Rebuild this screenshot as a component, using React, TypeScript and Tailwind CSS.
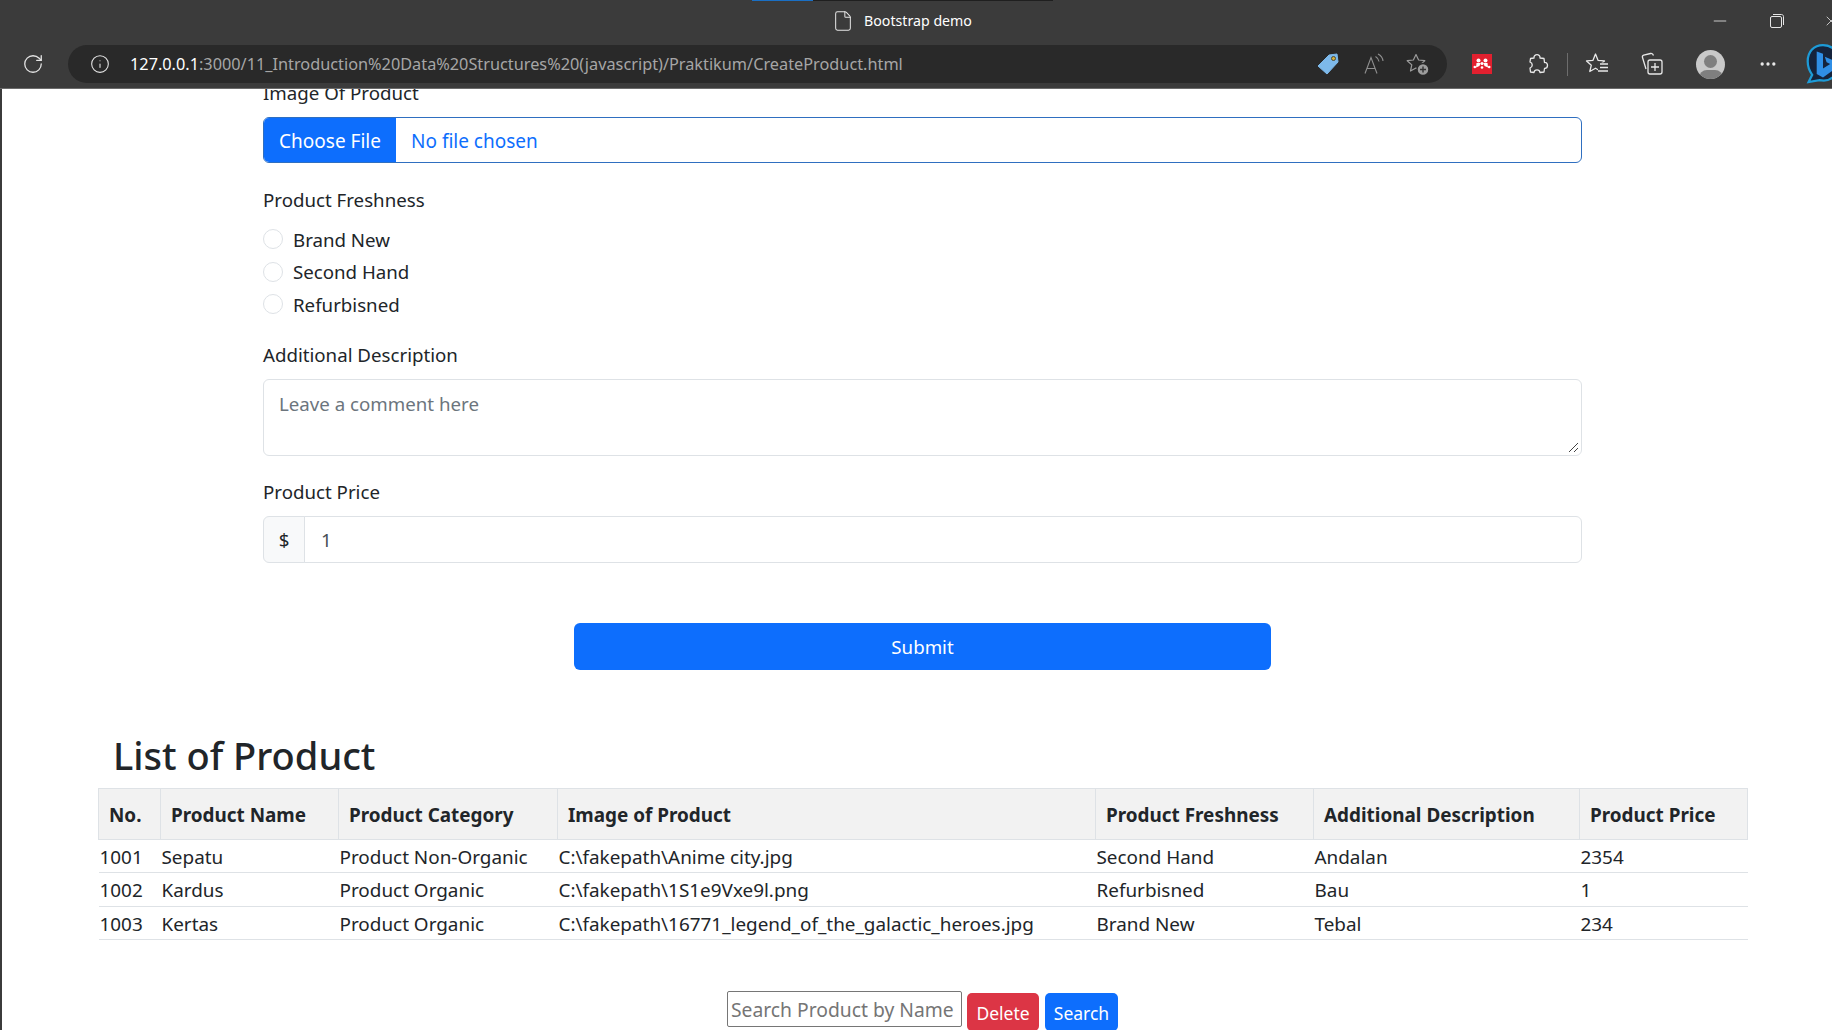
import { Info, RotateCw, File as FileIcon, Minus, X, MoreHorizontal } from "lucide-react";

const font = "font-['Noto_Sans','Open_Sans',sans-serif]";

const rows = [
  ["1001", "Sepatu", "Product Non-Organic", "C:\\fakepath\\Anime city.jpg", "Second Hand", "Andalan", "2354"],
  ["1002", "Kardus", "Product Organic", "C:\\fakepath\\1S1e9Vxe9l.png", "Refurbisned", "Bau", "1"],
  ["1003", "Kertas", "Product Organic", "C:\\fakepath\\16771_legend_of_the_galactic_heroes.jpg", "Brand New", "Tebal", "234"],
];

const headers = ["No.", "Product Name", "Product Category", "Image of Product", "Product Freshness", "Additional Description", "Product Price"];

const star = "M10 2.500 12.600 8 18.800 8.700 14.200 12.900 15.500 19 10 15.900 4.500 19 5.800 12.900 1.200 8.700 7.400 8z";

function BrowserBar() {
  return (
    <div className="h-[89px] shrink-0 bg-[#3b3b3b] border-b border-[#6b6b6b] text-white">
      <div className="h-[45px]">
        <div className="flex h-px ml-[752px]">
          <div className="w-[61px] bg-[#1a6fc4]" />
          <div className="w-[240px] bg-[#1f1f1f]" />
        </div>
        <div className="flex items-center h-[39px]">
          <FileIcon className="ml-[832px] w-[22px] h-[24px] text-[#e6e6e6] shrink-0" strokeWidth={1.1} />
          <span className="ml-[10px] w-[108px] text-[14.200px] whitespace-nowrap shrink-0">Bootstrap demo</span>
          <Minus className="ml-[738px] w-[20px] h-[20px] text-[#e6e6e6] shrink-0" strokeWidth={1} />
          <svg viewBox="0 0 14 14" fill="none" stroke="#e6e6e6" strokeWidth="1" className="ml-[40px] w-[14px] h-[14px] shrink-0">
            <rect x="0.500" y="2.500" width="11" height="11" rx="1.500" />
            <path d="M3 .5h8.500c1.100 0 2 .9 2 2V11" />
          </svg>
          <X className="ml-[39px] w-[16px] h-[16px] text-[#e6e6e6] shrink-0" strokeWidth={1.2} />
        </div>
      </div>
      <div className="flex items-center h-[38px]">
        <RotateCw className="ml-[22px] w-[22px] h-[22px] text-[#e4e4e4] shrink-0" strokeWidth={1.4} />
        <div className="ml-[24px] w-[1379px] h-[38px] rounded-full bg-[#292929] flex items-center shrink-0">
          <Info className="ml-[22px] w-[20px] h-[20px] text-[#e4e4e4] shrink-0" strokeWidth={1.3} />
          <div className="ml-[20px] w-[780px] text-[16.300px] whitespace-nowrap shrink-0">
            <span className="text-white">127.0.0.1</span>
            <span className="text-[#a6a6a6]">:3000/11_Introduction%20Data%20Structures%20(javascript)/Praktikum/CreateProduct.html</span>
          </div>
          <svg viewBox="0 0 22 22" className="ml-[407px] w-[22px] h-[22px] shrink-0">
            <path d="M1 13 12 2l8-1 1 8-11 12z" fill="#7db9ea" stroke="#7db9ea" strokeLinejoin="round" />
            <circle cx="16.500" cy="5.500" r="2" fill="#d8b23a" stroke="#4a4a35" />
          </svg>
          <svg viewBox="0 0 22 22" fill="none" stroke="#8f8f8f" strokeWidth="1.100" className="ml-[24px] w-[22px] h-[22px] shrink-0">
            <path d="M2 20.500 8 4.500l6 16M4 15.500h8" />
            <path d="M12.500 3.500c2 1.200 3.200 3 3.500 5M15 1c3 1.500 4.700 4 5 7" />
          </svg>
          <svg viewBox="0 0 24 24" fill="none" className="ml-[21px] w-[24px] h-[24px] shrink-0">
            <path d={star} stroke="#9c9c9c" strokeWidth="1.200" strokeLinejoin="round" />
            <circle cx="17" cy="17.500" r="6" fill="#9c9c9c" stroke="#292929" strokeWidth="1.500" />
            <path d="M17 14.500v6M14 17.500h6" stroke="#333333" strokeWidth="1.400" />
          </svg>
        </div>
        <div className="ml-[25px] w-[20px] h-[20px] bg-[#e2202f] flex items-center justify-center shrink-0">
          <svg viewBox="0 0 20 20" className="w-[20px] h-[20px]" fill="white">
            <circle cx="6.500" cy="6.500" r="2" />
            <circle cx="13.500" cy="6.500" r="2" />
            <circle cx="10" cy="9.500" r="1.600" />
            <circle cx="2.800" cy="13" r="1.300" />
            <circle cx="10" cy="13.500" r="1.300" />
            <circle cx="17.200" cy="13" r="1.300" />
            <path d="M4.500 9h4l-1 3-3.500 1.500zM11.500 9h4l.5 4.500-3.500-1.500z" />
          </svg>
        </div>
        <svg viewBox="0 0 24 24" fill="none" stroke="#e8e8e8" strokeWidth="1.300" className="ml-[33px] w-[24px] h-[24px] shrink-0">
          <path d="M9 6c-.5-4.500 6.500-4.500 6 0l4 .5.500 4c4-.5 4 6 0 6l-.5 3.500-4 .5c-.5-3.500-5.500-3.500-6 0l-3.500-.5L5 16c3-1 3-5 0-6l.5-3.500z" strokeLinejoin="round" />
        </svg>
        <div className="ml-[18px] w-px h-[23px] bg-[#6d6d6d] shrink-0" />
        <svg viewBox="0 0 24 24" fill="none" className="ml-[17px] w-[24px] h-[24px] shrink-0">
          <path d="M10.500 2 13 8.300l6.500.6-5 4.300 1.500 6.300-5.500-3.300-5.700 3.300 1.500-6.300L1.500 8.900 8 8.300z" stroke="#e8e8e8" strokeWidth="1.300" strokeLinejoin="round" />
          <rect x="13" y="10.500" width="11" height="13" fill="#3b3b3b" />
          <path d="M15 12h8M15 15.500h8M13 19h10" stroke="#e8e8e8" strokeWidth="1.300" />
        </svg>
        <svg viewBox="0 0 24 24" fill="none" stroke="#e8e8e8" strokeWidth="1.300" className="ml-[31px] w-[24px] h-[24px] shrink-0">
          <path d="M6 17 2.500 5.500c-.3-1 .2-2 1.200-2.300L10.500 1.500c1.300-.3 2.500.5 3 2" />
          <rect x="8" y="8" width="14" height="14" rx="2" />
          <path d="M15 11v8M11 15h8" />
        </svg>
        <div className="ml-[32px] w-[29px] h-[29px] rounded-full bg-[#c9c9c9] overflow-hidden flex flex-col items-center shrink-0">
          <div className="mt-[5px] w-[13px] h-[13px] rounded-full bg-[#7f7f7f] shrink-0" />
          <div className="mt-[2px] w-[24px] h-[16px] rounded-full bg-[#7f7f7f] shrink-0" />
        </div>
        <MoreHorizontal className="ml-[33px] w-[20px] h-[20px] text-[#e8e8e8] shrink-0" strokeWidth={2} />
        <svg viewBox="0 0 40 46" fill="none" className="ml-[27px] w-[36px] h-[42px] shrink-0">
          <path d="M20 2C10 2 3 9 3 20c0 6 2 11 5 15l-4 8 12-2c2 .5 3 .5 5 .5 10 0 17-10 17-21S30 2 20 2z" fill="#15233c" stroke="#1d9bd7" strokeWidth="2.500" />
          <path d="M13 9l7 2.500V28l8-5-4-2-2-6 12 5V28L20 38l-7-4z" fill="#2f8ee6" />
        </svg>
      </div>
    </div>
  );
}

function Radio({ label }: { label: string }) {
  return (
    <div className="flex items-center h-[32.500px]">
      <div className="w-[20px] h-[20px] rounded-full border border-[#dee2e6] bg-white" />
      <span className="ml-[10px] pt-px">{label}</span>
    </div>
  );
}

export default function App() {
  return (
    <div className={`h-[1030px] overflow-hidden flex flex-col bg-white text-[#212529] ${font}`}>
      <BrowserBar />
      <div className="flex-1 border-l-2 border-[#3b3b3b] overflow-hidden">
        <div className="text-[18.700px]">
          <div className="ml-[261px] w-[1319px]">
            <div className="h-[29px] -mt-[1px] leading-[10px]">Image Of Product</div>
            <div className="h-[46px] flex rounded-[6px] border border-[#2f6fc0] overflow-hidden text-[#0d6efd] text-[19px]">
              <div className="w-[132px] pt-[3px] bg-[#0d6efd] text-white flex items-center justify-center">Choose File</div>
              <div className="pl-[15px] pt-[3px] flex items-center">No file chosen</div>
            </div>
            <div className="mt-[23px] h-[26px] leading-[28px]">Product Freshness</div>
            <div className="mt-[11px]">
              <Radio label="Brand New" />
              <Radio label="Second Hand" />
              <Radio label="Refurbisned" />
            </div>
            <div className="mt-[21px] h-[26px] leading-[26px]">Additional Description</div>
            <div className="mt-[11px] relative h-[77px] rounded-[6px] border border-[#dee2e6] pl-[15px] pt-[10px] text-[#6c757d]">
              Leave a comment here
              <svg viewBox="0 0 12 12" className="absolute right-[2px] bottom-[2px] w-[12px] h-[12px]" stroke="#444444" strokeWidth="1">
                <path d="M2 11 11 2M7 11l4-4" />
              </svg>
            </div>
            <div className="mt-[23px] h-[26px] leading-[26px]">Product Price</div>
            <div className="mt-[11px] flex h-[47px]">
              <div className="w-[42px] pt-[2px] rounded-l-[6px] border border-[#dee2e6] bg-[#f8f9fa] flex items-center justify-center">$</div>
              <div className="flex-1 -ml-px pt-[2px] rounded-r-[6px] border border-[#dee2e6] flex items-center pl-[16px] text-[#495057]">1</div>
            </div>
          </div>
          <div className="mt-[60px] ml-[572px] w-[697px] h-[47px] pt-[3px] rounded-[6px] bg-[#0d6efd] text-white flex items-center justify-center">Submit</div>
        </div>
        <h1 className="mt-[63px] ml-[111px] text-[38px] leading-[44px] font-medium">List of Product</h1>
        <table className="mt-[11px] ml-[96px] w-[1649px] table-fixed border-collapse text-[18.900px]">
          <colgroup>
            <col className="w-[62px]" />
            <col className="w-[178px]" />
            <col className="w-[219px]" />
            <col className="w-[538px]" />
            <col className="w-[218px]" />
            <col className="w-[266px]" />
            <col className="w-[168px]" />
          </colgroup>
          <thead>
            <tr className="h-[51px] bg-[#f2f2f2]">
              {headers.map((h) => (
                <th key={h} className="border border-[#dee2e6] pl-[10px] pt-[3px] text-left font-bold whitespace-nowrap">{h}</th>
              ))}
            </tr>
          </thead>
          <tbody>
            {rows.map((r) => (
              <tr key={r[0]} className="h-[33.500px] border-b border-[#dee2e6]">
                {r.map((c, i) => (
                  <td key={i} className="pl-[1px] pt-[3px] leading-[29px] whitespace-nowrap">{c}</td>
                ))}
              </tr>
            ))}
          </tbody>
        </table>
        <div className="mt-[51px] ml-[725px] flex items-start text-[17.500px]">
          <div className="w-[235px] h-[36px] rounded-[2px] border border-[#767676] pl-[3px] text-[19.300px] leading-[35px] text-[#757575] whitespace-nowrap overflow-hidden">Search Product by Name</div>
          <div className="mt-[2px] ml-[5px] w-[72px] h-[38px] pt-[2px] rounded-[5px] bg-[#dc3545] text-white flex items-center justify-center">Delete</div>
          <div className="mt-[2px] ml-[6px] w-[73px] h-[38px] pt-[2px] rounded-[5px] bg-[#0d6efd] text-white flex items-center justify-center">Search</div>
        </div>
      </div>
    </div>
  );
}
